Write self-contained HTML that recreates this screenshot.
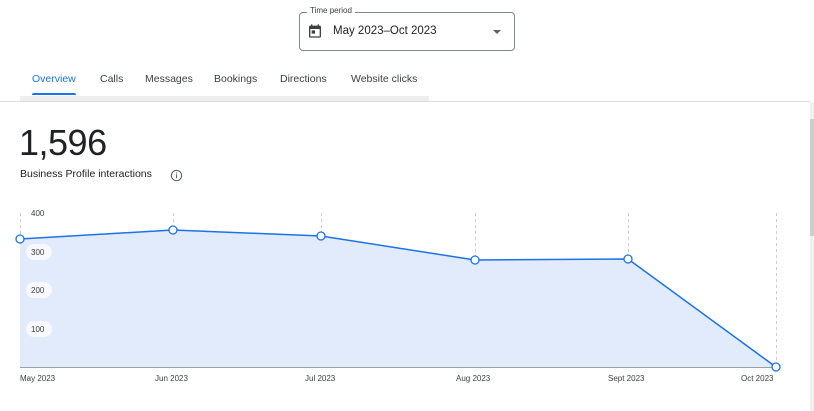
<!DOCTYPE html>
<html><head><style>
body{margin:0;width:814px;height:411px;overflow:hidden;background:#fff;font-family:"Liberation Sans",Roboto,sans-serif;position:relative}
.abs{position:absolute}
.tab{position:absolute;top:73px;font-size:10.5px;color:#3c4043}
</style></head><body>
<div class="abs" style="left:299px;top:12px;width:214px;height:37px;border:1px solid #80868b;border-radius:4px"></div>
<div class="abs" style="left:307px;top:6px;background:#fff;padding:0 3px;font-size:8px;color:#3c4043">Time period</div>
<svg class="abs" style="left:307px;top:23px" width="16" height="16" viewBox="0 0 24 24"><path fill="#3c4043" d="M19 4h-1V2h-2v2H8V2H6v2H5c-1.1 0-2 .9-2 2v14c0 1.1.9 2 2 2h14c1.1 0 2-.9 2-2V6c0-1.1-.9-2-2-2zm0 16H5V9h14v11zM7 11h5v5H7z"/></svg>
<div class="abs" style="left:333px;top:25px;font-size:11.5px;color:#202124">May 2023–Oct 2023</div>
<div class="abs" style="left:493px;top:30px;width:0;height:0;border-left:4px solid transparent;border-right:4px solid transparent;border-top:4px solid #5f6368"></div>
<div class="tab" style="left:32px;color:#1a73e8">Overview</div>
<div class="tab" style="left:100px">Calls</div>
<div class="tab" style="left:145px">Messages</div>
<div class="tab" style="left:214px">Bookings</div>
<div class="tab" style="left:280px">Directions</div>
<div class="tab" style="left:351px">Website clicks</div>
<div class="abs" style="left:32px;top:93px;width:44px;height:2px;background:#1a73e8;border-radius:2px 2px 0 0"></div>
<div class="abs" style="left:20px;top:96px;width:409px;height:5px;background:#eee"></div>
<div class="abs" style="left:0;top:101px;width:810px;height:1px;background:#dadce0"></div>
<div class="abs" style="left:810px;top:102px;width:4px;height:309px;background:#f1f1f1"></div>
<div class="abs" style="left:810px;top:119px;width:4px;height:117px;background:#cdcdcd"></div>
<div class="abs" style="left:19px;top:122px;font-size:36px;color:#202124;letter-spacing:-0.5px">1,596</div>
<div class="abs" style="left:20px;top:168px;font-size:10.5px;color:#202124">Business Profile interactions</div>
<svg class="abs" style="left:170px;top:169px" width="13" height="13" viewBox="0 0 24 24"><circle cx="12" cy="12" r="9.5" fill="none" stroke="#5f6368" stroke-width="2"/><rect x="11" y="10" width="2" height="7" fill="#5f6368"/><rect x="11" y="6.5" width="2" height="2" fill="#5f6368"/></svg>
<svg class="abs" style="left:0;top:0" width="814" height="411">
<g stroke="#ccc" stroke-dasharray="3,3" stroke-width="1">
<line x1="20.5" y1="213" x2="20.5" y2="367"/><line x1="173.5" y1="213" x2="173.5" y2="367"/><line x1="321.5" y1="213" x2="321.5" y2="367"/><line x1="475.5" y1="213" x2="475.5" y2="367"/><line x1="628.5" y1="213" x2="628.5" y2="367"/><line x1="776.5" y1="213" x2="776.5" y2="367"/></g>
<polygon points="20,239 173,230 321,236 475,260 628,259 776,367 20,367" fill="#e1ebfb"/>
<line x1="20" y1="367.5" x2="776" y2="367.5" stroke="#9aa0a6" stroke-width="1"/>
<polyline points="20,239 173,230 321,236 475,260 628,259 776,367" fill="none" stroke="#1a73e8" stroke-width="1.5"/>
<g fill="#fff" stroke="#1a73e8" stroke-width="1.3"><circle cx="20" cy="239" r="4"/><circle cx="173" cy="230" r="4"/><circle cx="321" cy="236" r="4"/><circle cx="475" cy="260" r="4"/><circle cx="628" cy="259" r="4"/><circle cx="776" cy="367" r="4"/></g>
<g fill="#f8f9fe"><rect x="26" y="244" width="26" height="16" rx="8"/><rect x="26" y="282" width="26" height="16" rx="8"/><rect x="26" y="321" width="26" height="16" rx="8"/></g>
<g font-family="Liberation Sans,sans-serif" font-size="8" fill="#3c4043">
<text x="31" y="216">400</text><text x="31" y="255">300</text><text x="31" y="293">200</text><text x="31" y="332">100</text>
<text x="20" y="381">May 2023</text><text x="155" y="381">Jun 2023</text><text x="305" y="381">Jul 2023</text><text x="456" y="381">Aug 2023</text><text x="608" y="381">Sept 2023</text><text x="741" y="381">Oct 2023</text></g>
</svg>
</body></html>
